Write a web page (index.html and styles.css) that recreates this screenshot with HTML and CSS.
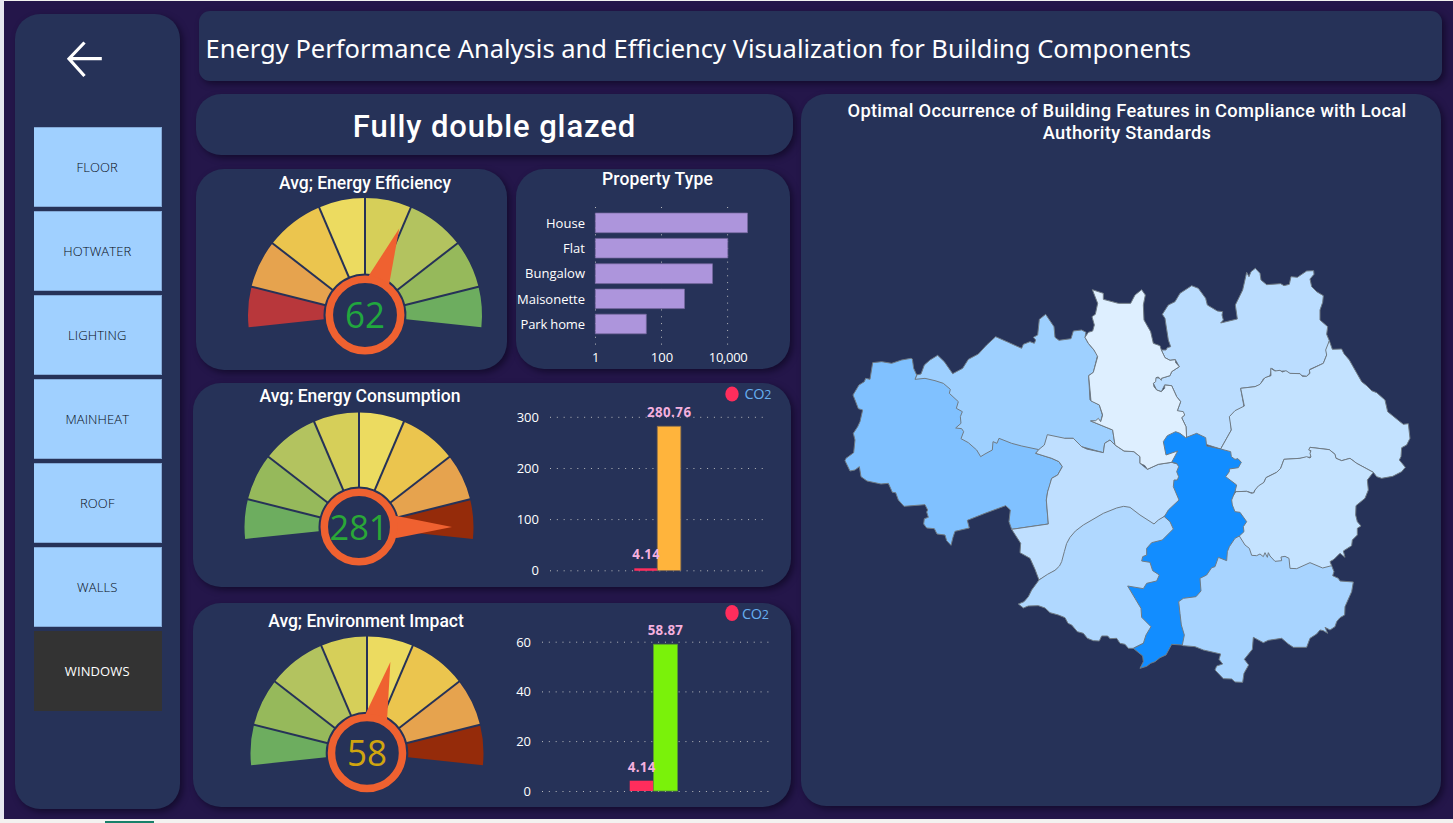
FILE: index.html
```html
<!DOCTYPE html>
<html lang="en">
<head>
<meta charset="utf-8">
<title>Energy Performance Analysis</title>
<link rel="stylesheet" href="styles.css">
</head>
<body>
<div class="board">
  <nav class="sidebar panel">
    <svg class="back" width="38" height="38" viewBox="0 0 38 38"><path d="M19.5 2.5 4 18.7 19.5 36M4 18.7H36.800"/></svg>
    <div class="menu">
      <button>FLOOR</button><button>HOTWATER</button><button>LIGHTING</button><button>MAINHEAT</button><button>ROOF</button><button>WALLS</button><button class="active">WINDOWS</button>
    </div>
  </nav>
  <main class="main">
    <header class="header panel"><h1>Energy Performance Analysis and Efficiency Visualization for Building Components</h1></header>
    <div class="content">
      <div class="left">
        <section class="feature panel"><span>Fully double glazed</span></section>
        <div class="pair">
          <section class="card efficiency panel">
            <h2>Avg; Energy Efficiency</h2>
            <svg class="gauge" data-gauge="62" width="250" height="170" viewBox="-125 -122 250 170"></svg>
          </section>
          <section class="card property panel">
            <h2>Property Type</h2>
            <svg width="274" height="172" viewBox="516 197 274 172">
              <path class="grid" d="M595.5 207V346M661.5 207V346M727.6 207V346"/>
              <g class="purple"><path d="M595.3 213h152.2v19.7H595.3zM595.3 238.4h132.5V258H595.3zM595.3 263.8h117.2v19.8H595.3zM595.3 289h89.2v19.6h-89.2zM595.3 314.2h51v19.6h-51z"/></g>
              <g class="axis end">
                <text x="585" y="228" textLength="39">House</text><text x="585" y="253" textLength="22">Flat</text><text x="585" y="278" textLength="60">Bungalow</text><text x="585" y="304" textLength="68">Maisonette</text><text x="585" y="329" textLength="64.500">Park home</text>
              </g>
              <g class="axis mid"><text x="595.7" y="362">1</text><text x="662" y="362">100</text><text x="728.3" y="362" textLength="39">10,000</text></g>
            </svg>
          </section>
        </div>
        <section class="card consumption panel">
          <div class="side"><h2>Avg; Energy Consumption</h2>
            <svg class="gauge" data-gauge="281" width="250" height="168" viewBox="-125 -120 250 168"></svg></div>
          <svg class="chart" width="291" height="204" viewBox="500 383 291 204">
            <path class="grid" d="M550 417.3H764M550 468.5H764M550 519.6H764M550 570.8H764"/>
            <path class="red" d="M634.300 568.300h23v2.500h-23z"/><path class="amber" d="M657.300 426.300h23.500v144.300h-23.500z"/>
            <g class="axis end"><text x="539" y="422">300</text><text x="539" y="473">200</text><text x="539" y="524">100</text><text x="539" y="575">0</text></g>
            <g class="value mid"><text x="669" y="417" textLength="44">280.76</text><text x="646" y="559" textLength="27.500">4.14</text></g>
            <ellipse class="red" cx="732" cy="394" rx="6.700" ry="7.500"/>
            <text class="co" x="744.500" y="399">CO<tspan class="two">2</tspan></text>
          </svg>
        </section>
        <section class="card impact panel">
          <div class="side"><h2>Avg; Environment Impact</h2>
            <svg class="gauge" data-gauge="58" width="250" height="170" viewBox="-125 -122 250 170"></svg></div>
          <svg class="chart" width="291" height="204" viewBox="500 603 291 204">
            <path class="grid" d="M542 642.200H768.500M542 691.900H768.500M542 741.600H768.500M542 791.500H768.500"/>
            <path class="red" d="M629.700 780.700h23.800V791h-23.800z"/><path class="green" d="M653.500 644.300h24V791h-24z"/>
            <g class="axis end"><text x="531" y="647">60</text><text x="531" y="696">40</text><text x="531" y="746">20</text><text x="531" y="796">0</text></g>
            <g class="value mid"><text x="665.300" y="635" textLength="35">58.87</text><text x="641.500" y="772" textLength="27.500">4.14</text></g>
            <ellipse class="red" cx="732" cy="613" rx="6.700" ry="8"/>
            <text class="co" x="742" y="619">CO<tspan class="two">2</tspan></text>
          </svg>
        </section>
      </div>
      <section class="map-card panel">
        <h2>Optimal Occurrence of Building Features in Compliance with Local Authority Standards</h2>
        <svg class="map" width="639" height="450" viewBox="801 250 639 450">
          <g transform="translate(835 300) scale(.33333)">
            <path fill="#9ed0ff" d="M240 238 245 225 258 222 268 195 285 180 308 166 328 185 353 221 383 205 400 178 430 162 455 135 482 110 520 127 560 145 565 133 585 125 598 130 602 120 595 112 608 105 613 58 632 43 657 80 660 112 672 121 708 116 715 93 740 90 753 97 750 112 760 130 777 150 788 165 775 217 761 227 765 300 793 315 802 345 797 365 767 363 833 390 840 435 825 420 809 430 805 458 740 440 715 415 690 415 660 440 640 470 602 480 560 600 300 400z"/>
            <path fill="#80c1ff" d="M232 177 228 175 200 180 170 190 140 185 113 188 105 238 92 235 88 245 72 255 60 275 54 285 60 300 70 326 83 330 75 365 68 380 55 400 60 420 56 458 33 475 30 482 45 513 60 510 73 500 78 530 96 543 138 552 160 550 172 577 182 578 190 600 207 619 270 614 278 630 275 636 280 652 268 656 266 672 275 684 298 686 306 702 330 705 335 722 348 736 354 712 360 694 403 684 397 661 450 640 512 617 526 630 522 665 530 688 640 672 634 600 638 575 645 555 650 535 668 525 682 500 672 485 650 475 602 460 612 449 560 438 530 430 492 415 486 430 474 425 472 450 450 462 437 470 425 450 400 428 378 416 386 395 380 386 362 384 378 370 376 350 382 335 364 325 370 305 343 280 346 268 325 250 300 242 270 235 240 238 245 225 236 205z"/>
          </g>
          <g transform="translate(1000 480) scale(.33333)">
            <path fill="#bfdfff" d="M142-136 195-125 220-125 245-100 260-93 310-82 314-110 330-120 345-105 372-87 402-85 420-70 420-50 442-32 475-47 515-53 560-40 560 60 495 108 462 132 370 150 117 300 105 268 90 235 60 218 62 190 35 148 145 132 139 60 143 35 155-5 173-15 187-40 177-55 155-65 107-80 117-92 133-105z"/>
            <path fill="#b0d8ff" d="M117 300Q145 280 165 271 182 258 185 245L193 215Q198 188 210 172 222 153 250 135L310 100 350 84Q372 75 390 82L420 105 462 132 475 120 495 108 540 140 500 200 500 300 480 440 430 490 400 505 385 505 375 493 360 490 350 475 330 476 323 468 305 468 298 483 280 482 262 475 250 460 232 455 215 435 204 430 195 413 175 405 150 398 135 384 115 377 85 378 70 384 55 372 72 365 85 350 95 330z"/>
          </g>
          <g transform="translate(1060 255) scale(.33333)">
            <path fill="#bbddff" d="M304 285 318 285 322 278 332 275 325 255 318 210 315 190 307 178 325 150 345 140 360 115 395 92 415 100 437 130 442 150 472 168 488 170 486 180 490 195 482 204 532 192 526 150 548 105 560 52 567 65 573 50 586 40 600 55 603 75 620 89 662 86 672 92 688 88 693 65 712 67 740 48 761 47 762 58 750 72 755 95 770 110 790 122 788 142 780 165 780 195 803 215 800 238 808 257 800 300 790 325 750 343 748 355 740 364 725 362 720 356 690 356 672 348 650 350 635 340 630 362 610 372 600 390 585 395 542 400 552 455 525 470 510 485 514 525 482 582 380 550 378 515 365 488 374 480 352 467 362 440 350 425 335 392 314 390 304 410 290 405 280 385 288 368 304 370 330 362 335 350 358 335 346 314 330 316 315 308z"/>
            <path fill="#deefff" d="M97 104 130 115 130 133 175 145 212 145 225 120 245 104 256 120 250 150 252 195 272 230 280 265 300 272 304 285 315 308 330 316 346 314 347 323 358 335 335 350 330 362 304 370 304 376 295 366 288 368 287 380 280 385 282 395 290 405 304 410 314 400 314 390 335 392 350 425 362 440 352 467 370 470 374 480 365 488 378 515 380 548 360 600 335 622 295 628 262 643 255 632 240 625 240 605 222 590 192 588 165 570 158 525 92 498 107 497 115 490 122 500 128 480 118 450 93 438 86 362 100 352 113 305 102 285 85 265 75 247 85 232 98 228 103 210 96 185 106 178 113 145z"/>
          </g>
          <g transform="translate(1210 255) scale(.33333)">
            <path fill="#c3e2ff" d="M358 257 367 283 395 282 402 296 418 315 435 345 455 380 470 392 485 407 500 413 525 435 533 470 570 500 580 508 595 506 600 550 590 570 575 578 573 605 568 615 586 637 575 650 548 664 515 670 500 665 490 652 440 625 420 610 395 617 378 610 375 598 358 584 300 577 303 606 270 610 222 613 212 640 200 652 168 668 162 682 135 705 130 715 110 709 78 710 0 665 0 590 32 582 64 525 58 485 75 467 103 453 92 400 135 395 150 388 165 368 183 362 182 340 195 348 210 346 217 351 228 347 240 355 270 356 277 364 290 364 300 355 298 345 340 325 350 300 347 285z"/>
          </g>
          <g transform="translate(1180 480) scale(.33333)">
            <path fill="#a8d4ff" d="M455 257 462 275 458 287 475 295 480 303 520 306 515 335 495 380 494 405 480 413 470 425 465 440 450 450 435 442 443 460 430 452 420 450 410 462 390 475 380 502 340 502 325 492 305 475 265 481 250 488 220 472 217 508 193 538 206 555 192 580 188 607 165 606 155 597 130 596 105 570 110 558 128 552 117 538 122 522 70 510 45 500 10 497 -60 460 -40 350 50 200 178 150z"/>
            <path fill="#c5e3ff" d="M168 35 200 34 215 40 222 38 225 30 235 18 252 7 258-7 290-23 302-35 312-62 360-65 380-70 390-66 393-69 390-80 393-88 386-90 390-98 448-91 465-77 468-65 485-58 510-65 530-50 580-23 562 0 565 30 555 55 528 77 527 105 532 125 543 138 532 145 532 165 517 180 515 197 490 213 495 232 480 220 462 238 450 245 455 257 428 264 390 248 350 266 330 265 327 235 315 229 303 231 305 242 285 244 270 228 265 218 262 232 255 218 250 230 240 222 230 227 215 226 208 205 195 195 178 168 120 100z"/>
          </g>
          <g transform="translate(1060 255) scale(.33333)">
            <path fill="#128dff" d="M310 560 322 542 347 530 360 535 377 548 410 535 437 548 440 573 482 582 512 590 514 605 525 613 534 611 544 622 535 638 508 642 508 650 497 665 530 690 525 710 515 735 517 750 525 770 540 772 560 800 550 815 552 830 538 843 525 850 508 875 502 890 500 917 475 907 465 935 455 938 440 960 420 970 423 1008 408 1025 370 1030 356 1040 360 1075 364 1110 373 1140 367 1170 335 1168 318 1200 300 1208 285 1220 272 1225 260 1234 240 1240 250 1220 248 1203 220 1180 250 1165 258 1140 273 1115 245 1087 243 1060 225 1030 203 993 250 1001 260 985 290 978 298 960 278 947 270 922 245 918 248 905 260 900 260 880 275 863 307 855 340 822 330 800 313 785 325 765 357 735 340 695 342 675 352 675 356 665 350 650 356 635 350 625 335 622 353 588 318 600z"/>
          </g>
        </svg>
      </section>
    </div>
  </main>
</div>
<div class="tab-mark"></div>
<script src="gauges.js"></script>
</body>
</html>
```

FILE: styles.css
```css
* { box-sizing: border-box; }
html, body { height: 100%; }
body { margin: 0; padding: 1px 0 0 4px; overflow: hidden; background: linear-gradient(#e6e7ef, #e6e7ef) 0 0 / 4px 819px no-repeat, #f3f2f0; font-family: "Open Sans", sans-serif; color: #fff; }
h1, h2 { margin: 0; }
svg { display: block; }
.board { display: flex; height: 818px; background: #24164a; padding: 13px 12px 0 10.5px; }
.panel { background: #263258; box-shadow: 3px 3px 6px rgba(8, 3, 24, .55); }
.sidebar { width: 165.500px; height: 795px; border-radius: 25px; padding: 26px 18.500px 0 19.500px; flex: none; }
.back { margin-left: 31px; fill: none; stroke: #fff; stroke-width: 3.200; }
.menu { display: flex; flex-direction: column; gap: 4.100px; margin-top: 48.500px; }
.menu button { height: 80px; border: 1px solid #84a9d6; border-left: 0; padding: 0; background: #a0d0ff; color: #060b14; font: 300 13px "Open Sans", sans-serif; letter-spacing: .1px; }
.menu .active { background: #333; border-color: #333; color: #fff; font-weight: 500; }
.main { margin: -3px 0 0 13px; flex: 1; }
.header { height: 70px; width: 1243px; margin-left: 6px; border-radius: 11px; padding: 18px 0 0 6.500px; }
.header h1 { font: 400 25.500px/38px "Noto Sans", sans-serif; white-space: nowrap; letter-spacing: 0; }
.content { display: flex; margin-top: 13px; gap: 8px; }
.left { width: 600px; flex: none; }
.feature { width: 597px; height: 61px; margin-left: 3px; border-radius: 25px; font: 500 31px/65px Roboto, sans-serif; text-align: center; white-space: nowrap; letter-spacing: .9px; }
.pair { display: flex; gap: 9px; margin: 14px 0 0 3px; align-items: flex-start; }
.card { border-radius: 28px; overflow: hidden; }
.card h2, .map-card h2 { font: 500 17.500px/22px Roboto, sans-serif; text-align: center; white-space: nowrap; }
.efficiency { width: 311px; height: 201px; padding: 3px 0 0 27px; }
.efficiency .gauge { margin-left: 17px; margin-top: -.7px; }
.property { width: 274px; height: 200px; }
.property h2 { padding-left: 9px; height: 28px; line-height: 21px; letter-spacing: .15px; }
.consumption { display: flex; width: 598px; height: 204px; margin-top: 13px; }
.impact { display: flex; width: 598px; height: 204px; margin-top: 16px; }
.side { width: 307px; }
.consumption h2 { width: 334px; margin-top: 2px; }
.consumption .gauge { margin-left: 41.400px; }
.impact h2 { width: 346px; margin-top: 7px; }
.impact .gauge { margin-left: 48.500px; margin-top: -.7px; }
.map-card { width: 640px; height: 712px; border-radius: 25px; padding-top: 6px; flex: none; }
.map-card h2 { white-space: normal; width: 580px; margin: 0 0 0 36px; font-size: 18.300px; letter-spacing: .3px; }
.map { margin-top: 106px; }
.map path { stroke: #6f7a84; stroke-width: 3; stroke-linejoin: round; }
.grid { fill: none; stroke: #b8babd; stroke-width: 1; stroke-dasharray: 1 5.830; }
.purple { fill: #ad95dc; stroke: #77699f; stroke-width: .7; }
.red { fill: #ff2d5c; }
.amber { fill: #ffb43c; stroke: #8d704d; stroke-width: .8; }
.green { fill: #7af20a; stroke: #5a9a30; stroke-width: .8; }
.axis { fill: #fff; font: 500 13px "Open Sans", sans-serif; }
.value { fill: #f4b0df; font: 700 13.300px "Open Sans", sans-serif; }
.end { text-anchor: end; }
.mid { text-anchor: middle; }
.co { fill: #66aef0; font: 400 14.500px "Open Sans", sans-serif; letter-spacing: -.3px; }
.two { font-size: 12.500px; }
.num { font-family: "Open Sans", sans-serif; font-weight: 400; text-anchor: middle; }
.tab-mark { width: 49px; height: 2px; margin: 2px 0 0 101px; background: #18806a; }
```

FILE: gauges.js
```js
const bands = ["#6dad5f", "#96b95b", "#b3c35f", "#d6cf59", "#ecdb60", "#ebc54e", "#e6a34e"];
const limits = [-96, -76, -52.2, -23.1, 0, 23.1, 52.2, 76, 96];
const gauges = {
  62: { colors: ["#b8373b", ...bands.slice().reverse()], r: 117, ring: 35.7, angle: 21.6, tip: 93, fill: "#21a73e", size: 36.5, len: 40 },
  281: { colors: [...bands, "#952b0a"], r: 114.5, ring: 34.7, angle: 90, tip: 93, fill: "#2aa737", size: 35, len: 59 },
  58: { colors: [...bands, "#952b0a"], r: 116.5, ring: 35.5, angle: 14.4, tip: 94, fill: "#d0a50f", size: 36, len: 40 }
};
const point = (r, deg) => {
  const a = deg * Math.PI / 180;
  return (r * Math.sin(a)).toFixed(2) + " " + (-r * Math.cos(a)).toFixed(2);
};
document.querySelectorAll("[data-gauge]").forEach(svg => {
  const value = svg.dataset.gauge, g = gauges[value], inner = g.ring + 5.8;
  let out = "";
  g.colors.forEach((c, i) => {
    const a = limits[i], b = limits[i + 1];
    out += `<path fill="${c}" d="M${point(inner, a)}L${point(g.r, a)}A${g.r} ${g.r} 0 0 1 ${point(g.r, b)}L${point(inner, b)}A${inner} ${inner} 0 0 0 ${point(inner, a)}"/>`;
  });
  limits.slice(1, -1).forEach(a => {
    out += `<path stroke="#263258" stroke-width="2" d="M${point(inner - 1, a)}L${point(g.r + 1, a)}"/>`;
  });
  out += `<path fill="#ef6130" transform="rotate(${g.angle})" d="M-11.3 -34L-10.8 -39L0 -${g.tip}L10.8 -39L11.3 -34Z"/>`;
  out += `<circle r="${g.ring}" fill="#263258" stroke="#ef6130" stroke-width="7.500"/>`;
  out += `<text class="num" x="0" y="12.500" fill="${g.fill}" font-size="${g.size}" textLength="${g.len}" lengthAdjust="spacingAndGlyphs">${value}</text>`;
  svg.innerHTML = out;
});
```
